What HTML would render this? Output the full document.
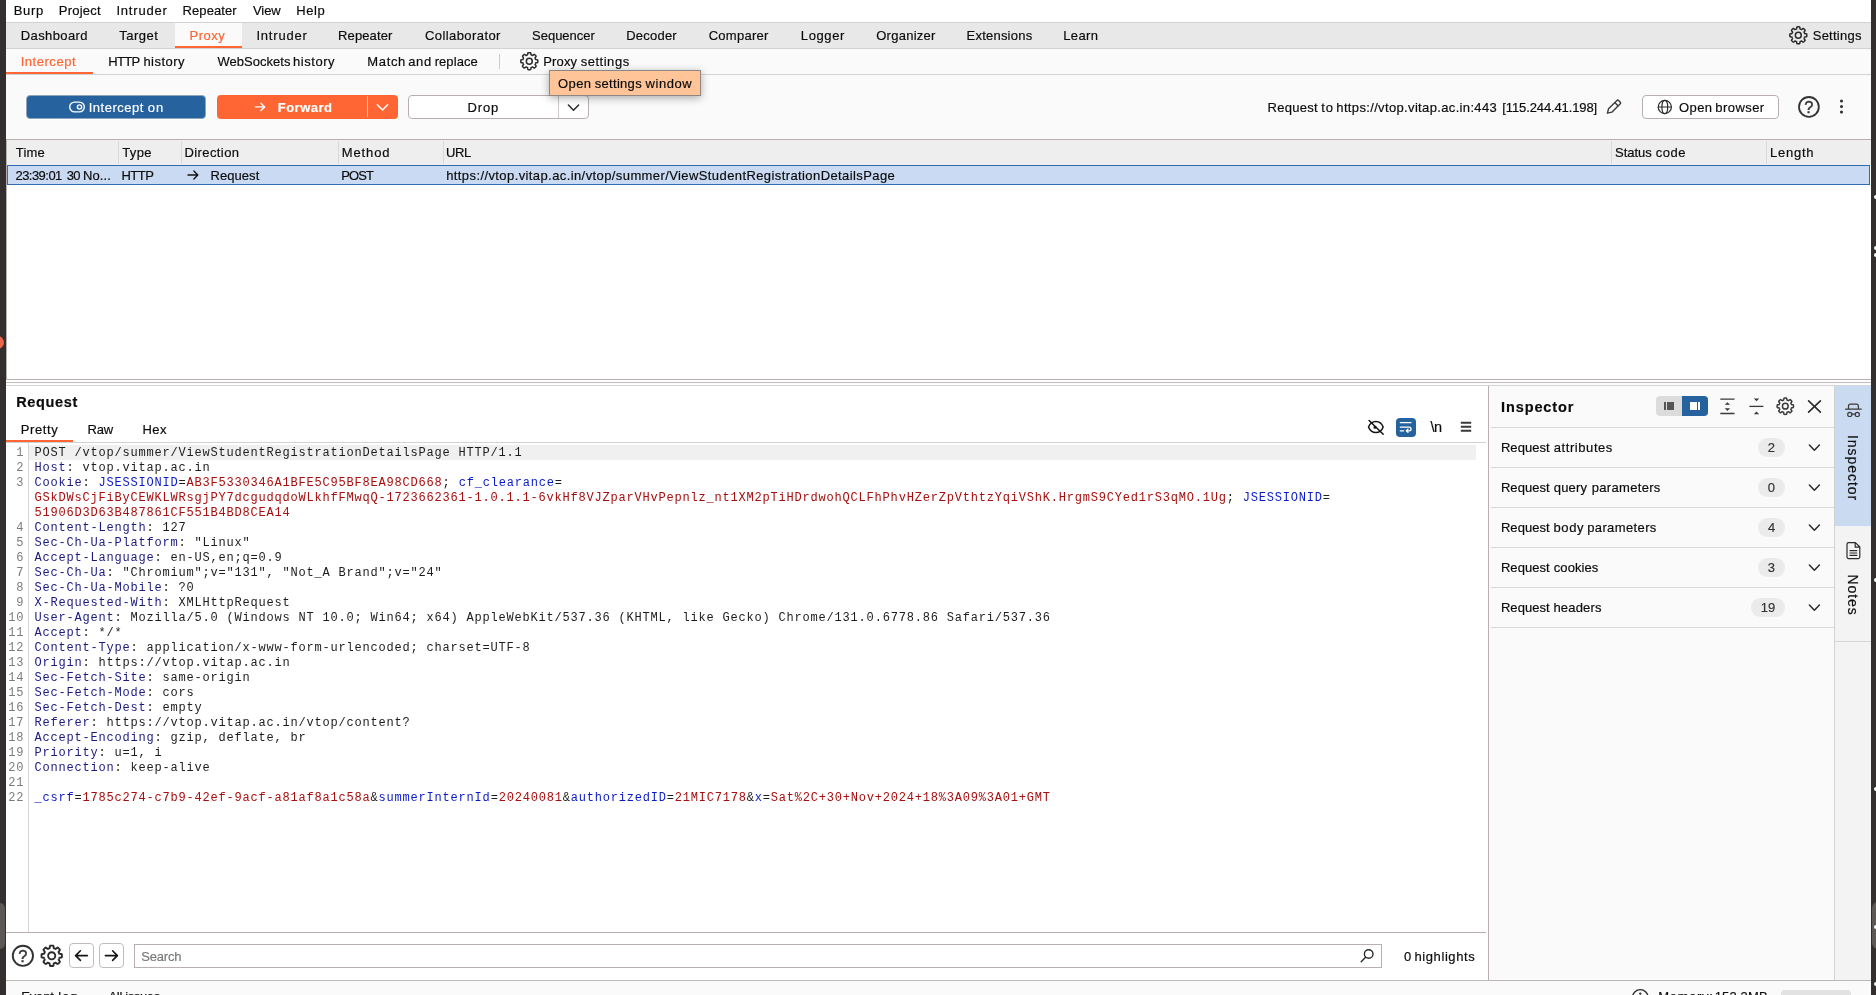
<!DOCTYPE html>
<html lang="en"><head><meta charset="utf-8"><title>Burp Suite - Proxy Intercept</title>
<style>

html,body{margin:0;padding:0;}
body{width:1876px;height:995px;overflow:hidden;position:relative;background:#fafafa;font-family:"Liberation Sans", "DejaVu Sans", sans-serif;font-size:13px;color:#0c0c0c;}
.w{position:absolute;left:0;top:0;width:1876px;height:995px;overflow:hidden;transform:translateZ(0);}
.a{position:absolute;box-sizing:border-box;}
.t{position:absolute;white-space:pre;-webkit-text-stroke:0.18px currentColor;}
svg{overflow:visible;}
.code{position:absolute;left:34.5px;top:445.5px;font-family:"Liberation Mono", "DejaVu Sans Mono", monospace;font-size:12px;letter-spacing:0.8px;line-height:15px;white-space:pre;color:#1c1c1c;}
.code div{height:15px;}
.ln{position:absolute;left:7px;top:445.5px;width:17.3px;text-align:right;font-family:"Liberation Mono", "DejaVu Sans Mono", monospace;font-size:12px;letter-spacing:0.8px;line-height:15px;white-space:pre;color:#7c7c7c;}
.ln div{height:15px;}
.h{color:#1a1a80;} .n{color:#0a1ac8;} .v{color:#a80e0e;}
</style></head><body><div class="w">
<div class="a" style="left:0px;top:0px;width:6px;height:995px;background:#322f2e;"></div>
<div class="a" style="left:1871px;top:0px;width:5px;height:995px;background:#322f2e;"></div>
<div class="a" style="left:-9px;top:336px;width:13px;height:13px;border-radius:50%;background:#e8664a"></div>
<div class="a" style="left:-6px;top:903px;width:11px;height:46px;border-radius:6px;background:#5c5856"></div>
<div class="a" style="left:1872px;top:902px;width:12px;height:47px;border-radius:6px;background:#5c5856"></div>
<div class="a" style="left:1873.5px;top:194.5px;width:5px;height:4px;border-radius:2px;background:#fff"></div>
<div class="a" style="left:1873.5px;top:245.5px;width:5px;height:4px;border-radius:2px;background:#fff"></div>
<div class="a" style="left:1873.5px;top:253px;width:5px;height:4px;border-radius:2px;background:#fff"></div>
<div class="a" style="left:1873.5px;top:578px;width:5px;height:4px;border-radius:2px;background:#fff"></div>
<div class="a" style="left:1873.5px;top:786.5px;width:5px;height:4px;border-radius:2px;background:#fff"></div>
<div class="a" style="left:1873.5px;top:925px;width:5px;height:4px;border-radius:2px;background:#fff"></div>
<div class="a" style="left:1873.5px;top:982px;width:5px;height:4px;border-radius:2px;background:#fff"></div>
<div class="a" style="left:6px;top:0px;width:1865px;height:22px;background:#ffffff;"></div>
<div class="a" style="left:6px;top:22px;width:1865px;height:1px;background:#cfd3d3;"></div>
<div class="a" style="left:6px;top:23px;width:1865px;height:25px;background:#e8e8e8;"></div>
<div class="a" style="left:6px;top:48px;width:1865px;height:1px;background:#cfd3d3;"></div>
<div class="a" style="left:175px;top:23px;width:66.5px;height:25px;background:#fafafa;"></div>
<div class="a" style="left:175px;top:46px;width:66.5px;height:2px;background:#ff6633;"></div>
<svg class="a" style="left:0;top:0" width="1876" height="995" fill="none" stroke="#2b2b2b" stroke-width="1.5" stroke-linejoin="round"><path d="M1806.80 35.30 L1806.79 35.63 L1806.77 35.97 L1806.74 36.30 L1806.67 36.63 L1806.03 36.84 L1805.08 36.93 L1804.60 37.08 L1804.52 37.32 L1804.44 37.57 L1804.35 37.80 L1804.24 38.04 L1804.13 38.27 L1804.01 38.50 L1804.25 38.94 L1804.85 39.68 L1805.16 40.28 L1804.98 40.56 L1804.76 40.82 L1804.54 41.07 L1804.31 41.31 L1804.07 41.54 L1803.82 41.76 L1803.56 41.98 L1803.28 42.16 L1802.68 41.85 L1801.94 41.25 L1801.50 41.01 L1801.27 41.13 L1801.04 41.24 L1800.80 41.35 L1800.57 41.44 L1800.32 41.52 L1800.08 41.60 L1799.93 42.08 L1799.84 43.03 L1799.63 43.67 L1799.30 43.74 L1798.97 43.77 L1798.63 43.79 L1798.30 43.80 L1797.97 43.79 L1797.63 43.77 L1797.30 43.74 L1796.97 43.67 L1796.76 43.03 L1796.67 42.08 L1796.52 41.60 L1796.28 41.52 L1796.03 41.44 L1795.80 41.35 L1795.56 41.24 L1795.33 41.13 L1795.10 41.01 L1794.66 41.25 L1793.92 41.85 L1793.32 42.16 L1793.04 41.98 L1792.78 41.76 L1792.53 41.54 L1792.29 41.31 L1792.06 41.07 L1791.84 40.82 L1791.62 40.56 L1791.44 40.28 L1791.75 39.68 L1792.35 38.94 L1792.59 38.50 L1792.47 38.27 L1792.36 38.04 L1792.25 37.80 L1792.16 37.57 L1792.08 37.32 L1792.00 37.08 L1791.52 36.93 L1790.57 36.84 L1789.93 36.63 L1789.86 36.30 L1789.83 35.97 L1789.81 35.63 L1789.80 35.30 L1789.81 34.97 L1789.83 34.63 L1789.86 34.30 L1789.93 33.97 L1790.57 33.76 L1791.52 33.67 L1792.00 33.52 L1792.08 33.28 L1792.16 33.03 L1792.25 32.80 L1792.36 32.56 L1792.47 32.33 L1792.59 32.10 L1792.35 31.66 L1791.75 30.92 L1791.44 30.32 L1791.62 30.04 L1791.84 29.78 L1792.06 29.53 L1792.29 29.29 L1792.53 29.06 L1792.78 28.84 L1793.04 28.62 L1793.32 28.44 L1793.92 28.75 L1794.66 29.35 L1795.10 29.59 L1795.33 29.47 L1795.56 29.36 L1795.80 29.25 L1796.03 29.16 L1796.28 29.08 L1796.52 29.00 L1796.67 28.52 L1796.76 27.57 L1796.97 26.93 L1797.30 26.86 L1797.63 26.83 L1797.97 26.81 L1798.30 26.80 L1798.63 26.81 L1798.97 26.83 L1799.30 26.86 L1799.63 26.93 L1799.84 27.57 L1799.93 28.52 L1800.08 29.00 L1800.32 29.08 L1800.57 29.16 L1800.80 29.25 L1801.04 29.36 L1801.27 29.47 L1801.50 29.59 L1801.94 29.35 L1802.68 28.75 L1803.28 28.44 L1803.56 28.62 L1803.82 28.84 L1804.07 29.06 L1804.31 29.29 L1804.54 29.53 L1804.76 29.78 L1804.98 30.04 L1805.16 30.32 L1804.85 30.92 L1804.25 31.66 L1804.01 32.10 L1804.13 32.33 L1804.24 32.56 L1804.35 32.80 L1804.44 33.03 L1804.52 33.28 L1804.60 33.52 L1805.08 33.67 L1806.03 33.76 L1806.67 33.97 L1806.74 34.30 L1806.77 34.63 L1806.79 34.97Z"/><circle cx="1798.3" cy="35.3" r="2.97"/></svg>
<div class="a" style="left:6px;top:49px;width:1865px;height:25px;background:#fafafa;"></div>
<div class="a" style="left:6px;top:74px;width:1865px;height:1px;background:#cfd3d3;"></div>
<div class="a" style="left:6px;top:72px;width:87px;height:2px;background:#ff6633;"></div>
<div class="a" style="left:499px;top:54px;width:1px;height:15px;background:#cccccc;"></div>
<svg class="a" style="left:0;top:0" width="1876" height="995" fill="none" stroke="#2b2b2b" stroke-width="1.5" stroke-linejoin="round"><path d="M537.80 61.20 L537.79 61.53 L537.77 61.87 L537.74 62.20 L537.67 62.53 L537.03 62.74 L536.08 62.83 L535.60 62.98 L535.52 63.22 L535.44 63.47 L535.35 63.70 L535.24 63.94 L535.13 64.17 L535.01 64.40 L535.25 64.84 L535.85 65.58 L536.16 66.18 L535.98 66.46 L535.76 66.72 L535.54 66.97 L535.31 67.21 L535.07 67.44 L534.82 67.66 L534.56 67.88 L534.28 68.06 L533.68 67.75 L532.94 67.15 L532.50 66.91 L532.27 67.03 L532.04 67.14 L531.80 67.25 L531.57 67.34 L531.32 67.42 L531.08 67.50 L530.93 67.98 L530.84 68.93 L530.63 69.57 L530.30 69.64 L529.97 69.67 L529.63 69.69 L529.30 69.70 L528.97 69.69 L528.63 69.67 L528.30 69.64 L527.97 69.57 L527.76 68.93 L527.67 67.98 L527.52 67.50 L527.28 67.42 L527.03 67.34 L526.80 67.25 L526.56 67.14 L526.33 67.03 L526.10 66.91 L525.66 67.15 L524.92 67.75 L524.32 68.06 L524.04 67.88 L523.78 67.66 L523.53 67.44 L523.29 67.21 L523.06 66.97 L522.84 66.72 L522.62 66.46 L522.44 66.18 L522.75 65.58 L523.35 64.84 L523.59 64.40 L523.47 64.17 L523.36 63.94 L523.25 63.70 L523.16 63.47 L523.08 63.22 L523.00 62.98 L522.52 62.83 L521.57 62.74 L520.93 62.53 L520.86 62.20 L520.83 61.87 L520.81 61.53 L520.80 61.20 L520.81 60.87 L520.83 60.53 L520.86 60.20 L520.93 59.87 L521.57 59.66 L522.52 59.57 L523.00 59.42 L523.08 59.18 L523.16 58.93 L523.25 58.70 L523.36 58.46 L523.47 58.23 L523.59 58.00 L523.35 57.56 L522.75 56.82 L522.44 56.22 L522.62 55.94 L522.84 55.68 L523.06 55.43 L523.29 55.19 L523.53 54.96 L523.78 54.74 L524.04 54.52 L524.32 54.34 L524.92 54.65 L525.66 55.25 L526.10 55.49 L526.33 55.37 L526.56 55.26 L526.80 55.15 L527.03 55.06 L527.28 54.98 L527.52 54.90 L527.67 54.42 L527.76 53.47 L527.97 52.83 L528.30 52.76 L528.63 52.73 L528.97 52.71 L529.30 52.70 L529.63 52.71 L529.97 52.73 L530.30 52.76 L530.63 52.83 L530.84 53.47 L530.93 54.42 L531.08 54.90 L531.32 54.98 L531.57 55.06 L531.80 55.15 L532.04 55.26 L532.27 55.37 L532.50 55.49 L532.94 55.25 L533.68 54.65 L534.28 54.34 L534.56 54.52 L534.82 54.74 L535.07 54.96 L535.31 55.19 L535.54 55.43 L535.76 55.68 L535.98 55.94 L536.16 56.22 L535.85 56.82 L535.25 57.56 L535.01 58.00 L535.13 58.23 L535.24 58.46 L535.35 58.70 L535.44 58.93 L535.52 59.18 L535.60 59.42 L536.08 59.57 L537.03 59.66 L537.67 59.87 L537.74 60.20 L537.77 60.53 L537.79 60.87Z"/><circle cx="529.3" cy="61.2" r="2.97"/></svg>
<div class="a" style="left:26px;top:95px;width:180px;height:23.5px;background:#26629d;border-radius:4px;border:1px solid #8fa3bf;box-shadow:0 0 0 1px #ffffff"></div>
<svg class="a" style="left:0;top:0" width="1876" height="995" fill="none" stroke="#ffffff" stroke-width="1.4" stroke-linecap="round" stroke-linejoin="round"><rect x="69.7" y="102.1" width="14.6" height="9.8" rx="4.9"/><circle cx="79.5" cy="107" r="2.1"/></svg>
<div class="a" style="left:216.5px;top:95px;width:181.5px;height:23.5px;background:#ff6633;border-radius:4px;"></div>
<div class="a" style="left:366.8px;top:96.3px;width:1px;height:21px;background:#e4d2ca;"></div>
<svg class="a" style="left:0;top:0" width="1876" height="995" fill="none" stroke="#ffffff" stroke-width="1.4" stroke-linecap="round" stroke-linejoin="round"><path d="M255.3 106.9 H264.6 M260.90000000000003 103.2 L264.6 106.9 L260.90000000000003 110.60000000000001"/></svg>
<svg class="a" style="left:0;top:0" width="1876" height="995" fill="none" stroke="#ffffff" stroke-width="1.5" stroke-linecap="round" stroke-linejoin="round"><path d="M377.4 104.75 L382.5 110.05000000000001 L387.6 104.75"/></svg>
<div class="a" style="left:408px;top:95px;width:181px;height:23.5px;background:#ffffff;border-radius:4px;border:1px solid #b8b0b0"></div>
<div class="a" style="left:558px;top:96px;width:1px;height:21.5px;background:#d0caca;"></div>
<svg class="a" style="left:0;top:0" width="1876" height="995" fill="none" stroke="#2b2b2b" stroke-width="1.5" stroke-linecap="round" stroke-linejoin="round"><path d="M568.4 104.94999999999999 L573.5 110.25 L578.6 104.94999999999999"/></svg>
<div class="a" style="left:549px;top:70px;width:151.5px;height:26px;background:#ffc599;border:1px solid #8f8583;box-shadow:0 2px 8px rgba(0,0,0,.33)"></div>
<svg class="a" style="left:0;top:0" width="1876" height="995" fill="none" stroke="#3a3a3a" stroke-width="1.4" stroke-linecap="round" stroke-linejoin="round"><path d="M1607.41 113.19 L1608.55 108.78 L1616.96 100.51 Q1617.82 99.67 1618.66 100.52 L1620.27 102.16 Q1621.12 103.02 1620.26 103.86 L1611.84 112.13 Z M1614.83 102.61 L1618.12 105.96"/></svg>
<div class="a" style="left:1642px;top:95px;width:137px;height:23.5px;background:#ffffff;border-radius:4px;border:1px solid #b8b0b0"></div>
<svg class="a" style="left:0;top:0" width="1876" height="995" fill="none" stroke="#2b2b2b" stroke-width="1.2" stroke-linecap="round" stroke-linejoin="round"><circle cx="1664.8" cy="107" r="6.6"/><ellipse cx="1664.8" cy="107" rx="2.9" ry="6.6"/><path d="M1658.2 107 H1671.4"/></svg>
<svg class="a" style="left:0;top:0" width="1876" height="995" fill="none" stroke="#333333" stroke-width="1.8" stroke-linecap="round" stroke-linejoin="round"><circle cx="1808.9" cy="106.9" r="9.9"/></svg>
<span class="t" style="left:1798.9px;top:96.9px;width:20px;text-align:center;line-height:20px;font-size:16.5px;font-weight:400;color:#333333;-webkit-text-stroke:0.4px #333333;">?</span>
<svg class="a" style="left:0;top:0" width="1876" height="995" fill="#2b2b2b" stroke="none" stroke-width="0" stroke-linecap="round" stroke-linejoin="round"><circle cx="1841.5" cy="101" r="1.5"/><circle cx="1841.5" cy="106.5" r="1.5"/><circle cx="1841.5" cy="112" r="1.5"/></svg>
<div class="a" style="left:6px;top:139px;width:1865px;height:241px;background:#ffffff;border:1px solid #b8b0b0;border-right:none;"></div>
<div class="a" style="left:7px;top:140px;width:1864px;height:25px;background:#eeeeee;"></div>
<div class="a" style="left:118px;top:141px;width:1px;height:23px;background:#d9d9d9;"></div>
<div class="a" style="left:181px;top:141px;width:1px;height:23px;background:#d9d9d9;"></div>
<div class="a" style="left:338px;top:141px;width:1px;height:23px;background:#d9d9d9;"></div>
<div class="a" style="left:442.5px;top:141px;width:1px;height:23px;background:#d9d9d9;"></div>
<div class="a" style="left:1611px;top:141px;width:1px;height:23px;background:#d9d9d9;"></div>
<div class="a" style="left:1766px;top:141px;width:1px;height:23px;background:#d9d9d9;"></div>
<div class="a" style="left:7px;top:165px;width:1863px;height:20px;background:#c9daf2;border:1px solid #326cb0"></div>
<svg class="a" style="left:0;top:0" width="1876" height="995" fill="none" stroke="#141414" stroke-width="1.4" stroke-linecap="round" stroke-linejoin="round"><path d="M188 175 H197.8 M193.9 171.1 L197.8 175 L193.9 178.9"/></svg>
<div class="a" style="left:6px;top:380px;width:1865px;height:6px;background:#fdfdfd;"></div>
<div class="a" style="left:6px;top:382px;width:1865px;height:1px;background:#c4bebe;"></div>
<div class="a" style="left:6px;top:385px;width:1865px;height:1px;background:#d6d6d6;"></div>
<div class="a" style="left:6px;top:386px;width:1482px;height:594px;background:#ffffff;"></div>
<div class="a" style="left:6px;top:442px;width:1480px;height:1px;background:#cfd3d3;"></div>
<div class="a" style="left:6px;top:440px;width:66.5px;height:2px;background:#ff6633;"></div>
<svg class="a" style="left:0;top:0" width="1876" height="995" fill="none" stroke="#141414" stroke-width="1.5" stroke-linecap="round" stroke-linejoin="round"><path d="M1368.5 427 C1371.4 419.6 1380.4 419.6 1383.2 427 C1380.4 434.4 1371.4 434.4 1368.5 427 Z"/><circle cx="1375" cy="427.2" r="0.8" fill="#141414"/><path d="M1369.1 420.5 L1383.2 434.3"/></svg>
<div class="a" style="left:1396px;top:418px;width:20px;height:19px;border-radius:4px;background:#26629d"></div>
<svg class="a" style="left:0;top:0" width="1876" height="995" fill="none" stroke="#ffffff" stroke-width="1.3" stroke-linecap="round" stroke-linejoin="round"><path d="M1400.3 422.6 H1411 M1400.3 427.1 H1409.2 a1.85 1.85 0 0 1 0 3.7 H1406.6 M1408 429.2 L1406.3 430.8 L1408 432.4 M1400.3 430.8 H1403.6"/></svg>
<svg class="a" style="left:0;top:0" width="1876" height="995" fill="none" stroke="#3a3a3a" stroke-width="1.9" stroke-linecap="butt" stroke-linejoin="round"><path d="M1460.8 422.8 H1471.2 M1460.8 426.8 H1471.2 M1460.8 430.8 H1471.2"/></svg>
<div class="a" style="left:28px;top:443px;width:1px;height:489px;background:#d6d6d6;"></div>
<div class="a" style="left:29px;top:445px;width:1447px;height:15px;background:#f0f0f0;"></div>
<div class="a" style="left:6px;top:932px;width:1480px;height:1px;background:#b8b0b0;"></div>
<svg class="a" style="left:0;top:0" width="1876" height="995" fill="none" stroke="#333333" stroke-width="1.9" stroke-linecap="round" stroke-linejoin="round"><circle cx="22.9" cy="955.8" r="10.1"/></svg>
<span class="t" style="left:12.899999999999999px;top:945.8px;width:20px;text-align:center;line-height:20px;font-size:16.5px;font-weight:400;color:#333333;-webkit-text-stroke:0.4px #333333;">?</span>
<svg class="a" style="left:0;top:0" width="1876" height="995" fill="none" stroke="#2b2b2b" stroke-width="1.9" stroke-linejoin="round"><path d="M61.90 955.80 L61.89 956.20 L61.87 956.60 L61.83 957.00 L61.75 957.39 L60.98 957.65 L59.84 957.75 L59.26 957.93 L59.17 958.23 L59.07 958.52 L58.96 958.81 L58.83 959.09 L58.70 959.37 L58.56 959.64 L58.84 960.17 L59.56 961.06 L59.93 961.78 L59.71 962.11 L59.46 962.42 L59.19 962.72 L58.91 963.01 L58.62 963.29 L58.32 963.56 L58.01 963.81 L57.68 964.03 L56.96 963.66 L56.07 962.94 L55.54 962.66 L55.27 962.80 L54.99 962.93 L54.71 963.06 L54.42 963.17 L54.13 963.27 L53.83 963.36 L53.65 963.94 L53.55 965.08 L53.29 965.85 L52.90 965.93 L52.50 965.97 L52.10 965.99 L51.70 966.00 L51.30 965.99 L50.90 965.97 L50.50 965.93 L50.11 965.85 L49.85 965.08 L49.75 963.94 L49.57 963.36 L49.27 963.27 L48.98 963.17 L48.69 963.06 L48.41 962.93 L48.13 962.80 L47.86 962.66 L47.33 962.94 L46.44 963.66 L45.72 964.03 L45.39 963.81 L45.08 963.56 L44.78 963.29 L44.49 963.01 L44.21 962.72 L43.94 962.42 L43.69 962.11 L43.47 961.78 L43.84 961.06 L44.56 960.17 L44.84 959.64 L44.70 959.37 L44.57 959.09 L44.44 958.81 L44.33 958.52 L44.23 958.23 L44.14 957.93 L43.56 957.75 L42.42 957.65 L41.65 957.39 L41.57 957.00 L41.53 956.60 L41.51 956.20 L41.50 955.80 L41.51 955.40 L41.53 955.00 L41.57 954.60 L41.65 954.21 L42.42 953.95 L43.56 953.85 L44.14 953.67 L44.23 953.37 L44.33 953.08 L44.44 952.79 L44.57 952.51 L44.70 952.23 L44.84 951.96 L44.56 951.43 L43.84 950.54 L43.47 949.82 L43.69 949.49 L43.94 949.18 L44.21 948.88 L44.49 948.59 L44.78 948.31 L45.08 948.04 L45.39 947.79 L45.72 947.57 L46.44 947.94 L47.33 948.66 L47.86 948.94 L48.13 948.80 L48.41 948.67 L48.69 948.54 L48.98 948.43 L49.27 948.33 L49.57 948.24 L49.75 947.66 L49.85 946.52 L50.11 945.75 L50.50 945.67 L50.90 945.63 L51.30 945.61 L51.70 945.60 L52.10 945.61 L52.50 945.63 L52.90 945.67 L53.29 945.75 L53.55 946.52 L53.65 947.66 L53.83 948.24 L54.13 948.33 L54.42 948.43 L54.71 948.54 L54.99 948.67 L55.27 948.80 L55.54 948.94 L56.07 948.66 L56.96 947.94 L57.68 947.57 L58.01 947.79 L58.32 948.04 L58.62 948.31 L58.91 948.59 L59.19 948.88 L59.46 949.18 L59.71 949.49 L59.93 949.82 L59.56 950.54 L58.84 951.43 L58.56 951.96 L58.70 952.23 L58.83 952.51 L58.96 952.79 L59.07 953.08 L59.17 953.37 L59.26 953.67 L59.84 953.85 L60.98 953.95 L61.75 954.21 L61.83 954.60 L61.87 955.00 L61.89 955.40Z"/><circle cx="51.7" cy="955.8" r="3.57"/></svg>
<div class="a" style="left:69px;top:943px;width:24.6px;height:25px;background:#fff;border-radius:4px;border:1px solid #c4bcbc"></div>
<div class="a" style="left:99px;top:943px;width:24.6px;height:25px;background:#fff;border-radius:4px;border:1px solid #c4bcbc"></div>
<svg class="a" style="left:0;top:0" width="1876" height="995" fill="none" stroke="#141414" stroke-width="1.6" stroke-linecap="round" stroke-linejoin="round"><path d="M87.4 955.6 H75.6 M80.39999999999999 950.8000000000001 L75.6 955.6 L80.39999999999999 960.4"/></svg>
<svg class="a" style="left:0;top:0" width="1876" height="995" fill="none" stroke="#141414" stroke-width="1.6" stroke-linecap="round" stroke-linejoin="round"><path d="M105.4 955.6 H117.4 M112.60000000000001 950.8000000000001 L117.4 955.6 L112.60000000000001 960.4"/></svg>
<div class="a" style="left:134px;top:944px;width:1247.5px;height:24px;background:#fff;border:1px solid #b8b0b0"></div>
<svg class="a" style="left:0;top:0" width="1876" height="995" fill="none" stroke="#2b2b2b" stroke-width="1.4" stroke-linecap="round" stroke-linejoin="round"><circle cx="1368.7" cy="954" r="4.3"/><path d="M1365.6 957.2 L1361.2 961.8"/></svg>
<div class="a" style="left:1488px;top:386px;width:346px;height:594px;background:#fafafa;"></div>
<div class="a" style="left:1488px;top:386px;width:1px;height:594px;background:#b8b0b0;"></div>
<div class="a" style="left:1656px;top:396px;width:52px;height:20px;border-radius:4px;background:#dcdcdc"></div>
<div class="a" style="left:1682px;top:396px;width:26px;height:20px;border-radius:0 4px 4px 0;background:#26629d"></div>
<div class="a" style="left:1663.5px;top:401.7px;width:2px;height:8.2px;background:#555555;"></div>
<div class="a" style="left:1667px;top:401.7px;width:7.2px;height:8.2px;background:#555555;"></div>
<div class="a" style="left:1689.6px;top:401.7px;width:7.3px;height:8.2px;background:#ffffff;"></div>
<div class="a" style="left:1698.3px;top:401.7px;width:2.1px;height:8.2px;background:#ffffff;"></div>
<svg class="a" style="left:0;top:0" width="1876" height="995" fill="none" stroke="none" stroke-width="0" stroke-linecap="round" stroke-linejoin="round"><path d="M1720.3 399.1 H1734.5 M1720.3 413.5 H1734.5" stroke="#3a3a3a" stroke-width="1.3" stroke-linecap="butt"/><path d="M1727.4 402.2 L1730.1 404.8 H1724.7 Z M1727.4 411 L1730.1 408.3 H1724.7 Z" fill="#3a3a3a"/></svg>
<svg class="a" style="left:0;top:0" width="1876" height="995" fill="none" stroke="none" stroke-width="0" stroke-linecap="round" stroke-linejoin="round"><path d="M1749.4 406.4 H1763.4" stroke="#3a3a3a" stroke-width="1.3" stroke-linecap="butt"/><path d="M1756.5 401.3 L1759.2 398.6 H1753.8 Z M1756.5 411.5 L1759.2 414.3 H1753.8 Z" fill="#3a3a3a"/></svg>
<svg class="a" style="left:0;top:0" width="1876" height="995" fill="none" stroke="#3a3a3a" stroke-width="1.5" stroke-linejoin="round"><path d="M1793.50 406.20 L1793.49 406.52 L1793.47 406.84 L1793.44 407.16 L1793.38 407.48 L1792.76 407.68 L1791.84 407.77 L1791.38 407.92 L1791.30 408.15 L1791.22 408.39 L1791.13 408.62 L1791.03 408.84 L1790.93 409.07 L1790.81 409.29 L1791.04 409.72 L1791.62 410.42 L1791.92 411.01 L1791.74 411.28 L1791.54 411.53 L1791.32 411.77 L1791.10 412.00 L1790.87 412.22 L1790.63 412.44 L1790.38 412.64 L1790.11 412.82 L1789.52 412.52 L1788.82 411.94 L1788.39 411.71 L1788.17 411.83 L1787.94 411.93 L1787.72 412.03 L1787.49 412.12 L1787.25 412.20 L1787.02 412.28 L1786.87 412.74 L1786.78 413.66 L1786.58 414.28 L1786.26 414.34 L1785.94 414.37 L1785.62 414.39 L1785.30 414.40 L1784.98 414.39 L1784.66 414.37 L1784.34 414.34 L1784.02 414.28 L1783.82 413.66 L1783.73 412.74 L1783.58 412.28 L1783.35 412.20 L1783.11 412.12 L1782.88 412.03 L1782.66 411.93 L1782.43 411.83 L1782.21 411.71 L1781.78 411.94 L1781.08 412.52 L1780.49 412.82 L1780.22 412.64 L1779.97 412.44 L1779.73 412.22 L1779.50 412.00 L1779.28 411.77 L1779.06 411.53 L1778.86 411.28 L1778.68 411.01 L1778.98 410.42 L1779.56 409.72 L1779.79 409.29 L1779.67 409.07 L1779.57 408.84 L1779.47 408.62 L1779.38 408.39 L1779.30 408.15 L1779.22 407.92 L1778.76 407.77 L1777.84 407.68 L1777.22 407.48 L1777.16 407.16 L1777.13 406.84 L1777.11 406.52 L1777.10 406.20 L1777.11 405.88 L1777.13 405.56 L1777.16 405.24 L1777.22 404.92 L1777.84 404.72 L1778.76 404.63 L1779.22 404.48 L1779.30 404.25 L1779.38 404.01 L1779.47 403.78 L1779.57 403.56 L1779.67 403.33 L1779.79 403.11 L1779.56 402.68 L1778.98 401.98 L1778.68 401.39 L1778.86 401.12 L1779.06 400.87 L1779.28 400.63 L1779.50 400.40 L1779.73 400.18 L1779.97 399.96 L1780.22 399.76 L1780.49 399.58 L1781.08 399.88 L1781.78 400.46 L1782.21 400.69 L1782.43 400.57 L1782.66 400.47 L1782.88 400.37 L1783.11 400.28 L1783.35 400.20 L1783.58 400.12 L1783.73 399.66 L1783.82 398.74 L1784.02 398.12 L1784.34 398.06 L1784.66 398.03 L1784.98 398.01 L1785.30 398.00 L1785.62 398.01 L1785.94 398.03 L1786.26 398.06 L1786.58 398.12 L1786.78 398.74 L1786.87 399.66 L1787.02 400.12 L1787.25 400.20 L1787.49 400.28 L1787.72 400.37 L1787.94 400.47 L1788.17 400.57 L1788.39 400.69 L1788.82 400.46 L1789.52 399.88 L1790.11 399.58 L1790.38 399.76 L1790.63 399.96 L1790.87 400.18 L1791.10 400.40 L1791.32 400.63 L1791.54 400.87 L1791.74 401.12 L1791.92 401.39 L1791.62 401.98 L1791.04 402.68 L1790.81 403.11 L1790.93 403.33 L1791.03 403.56 L1791.13 403.78 L1791.22 404.01 L1791.30 404.25 L1791.38 404.48 L1791.84 404.63 L1792.76 404.72 L1793.38 404.92 L1793.44 405.24 L1793.47 405.56 L1793.49 405.88Z"/><circle cx="1785.3" cy="406.2" r="2.87"/></svg>
<svg class="a" style="left:0;top:0" width="1876" height="995" fill="none" stroke="#2b2b2b" stroke-width="1.6" stroke-linecap="round" stroke-linejoin="round"><path d="M1808.6 400.9 L1820.4 412.2 M1820.4 400.9 L1808.6 412.2"/></svg>
<div class="a" style="left:1491px;top:427px;width:343px;height:1px;background:#d9d9d9;"></div>
<div class="a" style="left:1758px;top:437.90000000000003px;width:26.6px;height:18.8px;border-radius:9.4px;background:#ebebeb"></div>
<svg class="a" style="left:0;top:0" width="1876" height="995" fill="none" stroke="#2b2b2b" stroke-width="1.5" stroke-linecap="round" stroke-linejoin="round"><path d="M1809.4 445.0 L1814.4 450.20000000000005 L1819.4 445.0"/></svg>
<div class="a" style="left:1491px;top:467px;width:343px;height:1px;background:#d9d9d9;"></div>
<div class="a" style="left:1758px;top:477.90000000000003px;width:26.6px;height:18.8px;border-radius:9.4px;background:#ebebeb"></div>
<svg class="a" style="left:0;top:0" width="1876" height="995" fill="none" stroke="#2b2b2b" stroke-width="1.5" stroke-linecap="round" stroke-linejoin="round"><path d="M1809.4 485.0 L1814.4 490.20000000000005 L1819.4 485.0"/></svg>
<div class="a" style="left:1491px;top:507px;width:343px;height:1px;background:#d9d9d9;"></div>
<div class="a" style="left:1758px;top:517.9px;width:26.6px;height:18.8px;border-radius:9.4px;background:#ebebeb"></div>
<svg class="a" style="left:0;top:0" width="1876" height="995" fill="none" stroke="#2b2b2b" stroke-width="1.5" stroke-linecap="round" stroke-linejoin="round"><path d="M1809.4 524.9999999999999 L1814.4 530.1999999999999 L1819.4 524.9999999999999"/></svg>
<div class="a" style="left:1491px;top:547px;width:343px;height:1px;background:#d9d9d9;"></div>
<div class="a" style="left:1758px;top:557.9px;width:26.6px;height:18.8px;border-radius:9.4px;background:#ebebeb"></div>
<svg class="a" style="left:0;top:0" width="1876" height="995" fill="none" stroke="#2b2b2b" stroke-width="1.5" stroke-linecap="round" stroke-linejoin="round"><path d="M1809.4 564.9999999999999 L1814.4 570.1999999999999 L1819.4 564.9999999999999"/></svg>
<div class="a" style="left:1491px;top:587px;width:343px;height:1px;background:#d9d9d9;"></div>
<div class="a" style="left:1751px;top:597.9px;width:33.6px;height:18.8px;border-radius:9.4px;background:#ebebeb"></div>
<svg class="a" style="left:0;top:0" width="1876" height="995" fill="none" stroke="#2b2b2b" stroke-width="1.5" stroke-linecap="round" stroke-linejoin="round"><path d="M1809.4 604.9999999999999 L1814.4 610.1999999999999 L1819.4 604.9999999999999"/></svg>
<div class="a" style="left:1491px;top:627px;width:343px;height:1px;background:#d9d9d9;"></div>
<div class="a" style="left:1834px;top:386px;width:37px;height:594px;background:#f4f3f3;"></div>
<div class="a" style="left:1834px;top:386px;width:1px;height:594px;background:#cfd3d3;"></div>
<div class="a" style="left:1835px;top:386px;width:36px;height:140px;background:#c9daf1;"></div>
<div class="a" style="left:1835px;top:640.5px;width:36px;height:1px;background:#d6d6d6;"></div>
<svg class="a" style="left:0;top:0" width="1876" height="995" fill="none" stroke="#3a3a3a" stroke-width="1.2" stroke-linecap="round" stroke-linejoin="round"><path d="M1845.6 409.2 H1861.2 M1848.5 409 V406.2 a2 2 0 0 1 2 -2 H1856.4 a2 2 0 0 1 2 2 V409"/><circle cx="1849.8" cy="414.4" r="2.1"/><circle cx="1857.3" cy="414.4" r="2.1"/><path d="M1851.9 414.2 H1855.2"/></svg>
<span class="t" style="left:1853.2px;top:467.7px;font-size:14px;line-height:16px;transform:translate(-50%,-50%) rotate(90deg);letter-spacing:0.95px;color:#111">Inspector</span>
<svg class="a" style="left:0;top:0" width="1876" height="995" fill="none" stroke="#2b2b2b" stroke-width="1.2" stroke-linecap="round" stroke-linejoin="round"><path d="M1847 544.2 a1.6 1.6 0 0 1 1.6 -1.6 H1855.4 L1859.8 547 V557 a1.6 1.6 0 0 1 -1.6 1.6 H1848.6 a1.6 1.6 0 0 1 -1.6 -1.6 Z M1855.2 542.8 V547.2 H1859.6 M1850 550.6 H1856.8 M1850 553 H1856.8 M1850 555.4 H1856.8"/></svg>
<span class="t" style="left:1853.2px;top:595.4px;font-size:14px;line-height:16px;transform:translate(-50%,-50%) rotate(90deg);letter-spacing:0.9px;color:#111">Notes</span>
<div class="a" style="left:6px;top:980px;width:1865px;height:1px;background:#bdb6b6;"></div>
<div class="a" style="left:6px;top:981px;width:1865px;height:14px;background:#fafafa;"></div>
<svg class="a" style="left:0;top:0" width="1876" height="995" fill="none" stroke="#2b2b2b" stroke-width="1.4" stroke-linecap="round" stroke-linejoin="round"><circle cx="1640.3" cy="997.4" r="7.8"/><circle cx="1640.3" cy="993.6" r="0.5"/></svg>
<div class="a" style="left:1780.5px;top:990px;width:70.5px;height:12px;border-radius:4px;background:#e2e2e2"></div>
<span class="t " style="left:13.78px;top:1.5px;line-height:18px;font-size:13px;color:#0c0c0c;letter-spacing:0.665px;">Burp</span>
<span class="t " style="left:58.78px;top:1.5px;line-height:18px;font-size:13px;color:#0c0c0c;letter-spacing:0.215px;">Project</span>
<span class="t " style="left:116.4px;top:1.5px;line-height:18px;font-size:13px;color:#0c0c0c;letter-spacing:0.815px;">Intruder</span>
<span class="t " style="left:182.53px;top:1.5px;line-height:18px;font-size:13px;color:#0c0c0c;letter-spacing:0.093px;">Repeater</span>
<span class="t " style="left:253.04px;top:1.5px;line-height:18px;font-size:13px;color:#0c0c0c;letter-spacing:-0.109px;">View</span>
<span class="t " style="left:296.28px;top:1.5px;line-height:18px;font-size:13px;color:#0c0c0c;letter-spacing:0.571px;">Help</span>
<span class="t " style="left:20.78px;top:26.5px;line-height:18px;font-size:13px;color:#0c0c0c;letter-spacing:0.393px;">Dashboard</span>
<span class="t " style="left:119.31px;top:26.5px;line-height:18px;font-size:13px;color:#0c0c0c;letter-spacing:0.469px;">Target</span>
<span class="t " style="left:189.53px;top:26.5px;line-height:18px;font-size:13px;color:#ff6633;letter-spacing:0.489px;">Proxy</span>
<span class="t " style="left:256.4px;top:26.5px;line-height:18px;font-size:13px;color:#0c0c0c;letter-spacing:0.815px;">Intruder</span>
<span class="t " style="left:338.03px;top:26.5px;line-height:18px;font-size:13px;color:#0c0c0c;letter-spacing:0.128px;">Repeater</span>
<span class="t " style="left:424.94px;top:26.5px;line-height:18px;font-size:13px;color:#0c0c0c;letter-spacing:0.423px;">Collaborator</span>
<span class="t " style="left:532.01px;top:26.5px;line-height:18px;font-size:13px;color:#0c0c0c;letter-spacing:0.002px;">Sequencer</span>
<span class="t " style="left:626.28px;top:26.5px;line-height:18px;font-size:13px;color:#0c0c0c;letter-spacing:0.207px;">Decoder</span>
<span class="t " style="left:708.69px;top:26.5px;line-height:18px;font-size:13px;color:#0c0c0c;letter-spacing:0.276px;">Comparer</span>
<span class="t " style="left:800.78px;top:26.5px;line-height:18px;font-size:13px;color:#0c0c0c;letter-spacing:0.630px;">Logger</span>
<span class="t " style="left:876.23px;top:26.5px;line-height:18px;font-size:13px;color:#0c0c0c;letter-spacing:0.263px;">Organizer</span>
<span class="t " style="left:966.53px;top:26.5px;line-height:18px;font-size:13px;color:#0c0c0c;letter-spacing:0.227px;">Extensions</span>
<span class="t " style="left:1063.28px;top:26.5px;line-height:18px;font-size:13px;color:#0c0c0c;letter-spacing:0.378px;">Learn</span>
<span class="t " style="left:1812.71px;top:26.5px;line-height:18px;font-size:13px;color:#0c0c0c;letter-spacing:0.254px;">Settings</span>
<span class="t " style="left:20.65px;top:52.75px;line-height:18px;font-size:13px;color:#ff6633;letter-spacing:0.538px;">Intercept</span>
<span class="t " style="left:108.13px;top:52.75px;line-height:18px;font-size:13px;color:#0c0c0c;letter-spacing:-0.600px;">HTTP</span>
<span class="t " style="left:143.4px;top:52.75px;line-height:18px;font-size:13px;color:#0c0c0c;letter-spacing:0.488px;">history</span>
<span class="t " style="left:217.44px;top:52.75px;line-height:18px;font-size:13px;color:#0c0c0c;letter-spacing:0.031px;">WebSockets</span>
<span class="t " style="left:293.0px;top:52.75px;line-height:18px;font-size:13px;color:#0c0c0c;letter-spacing:0.538px;">history</span>
<span class="t " style="left:367.23px;top:52.75px;line-height:18px;font-size:13px;color:#0c0c0c;letter-spacing:0.676px;">Match</span>
<span class="t " style="left:408.35px;top:52.75px;line-height:18px;font-size:13px;color:#0c0c0c;letter-spacing:0.544px;">and</span>
<span class="t " style="left:434.64px;top:52.75px;line-height:18px;font-size:13px;color:#0c0c0c;letter-spacing:0.083px;">replace</span>
<span class="t " style="left:543.13px;top:52.75px;line-height:18px;font-size:13px;color:#0c0c0c;letter-spacing:0.189px;">Proxy</span>
<span class="t " style="left:580.64px;top:52.75px;line-height:18px;font-size:13px;color:#0c0c0c;letter-spacing:0.531px;">settings</span>
<span class="t " style="left:88.7px;top:98.5px;line-height:18px;font-size:13px;color:#ffffff;letter-spacing:0.525px;">Intercept</span>
<span class="t " style="left:147.81px;top:98.5px;line-height:18px;font-size:13px;color:#ffffff;letter-spacing:0.900px;">on</span>
<span class="t " style="left:277.73px;top:98.7px;line-height:18px;font-size:13px;color:#ffffff;font-weight:700;letter-spacing:0.505px;">Forward</span>
<span class="t " style="left:467.53px;top:98.7px;line-height:18px;font-size:13px;color:#0c0c0c;letter-spacing:0.842px;">Drop</span>
<span class="t " style="left:557.98px;top:74.9px;line-height:18px;font-size:13px;color:#0c0c0c;letter-spacing:0.416px;">Open</span>
<span class="t " style="left:594.74px;top:74.9px;line-height:18px;font-size:13px;color:#0c0c0c;letter-spacing:0.303px;">settings</span>
<span class="t " style="left:645.62px;top:74.9px;line-height:18px;font-size:13px;color:#0c0c0c;letter-spacing:0.538px;">window</span>
<span class="t " style="left:1267.53px;top:98.6px;line-height:18px;font-size:13px;color:#0c0c0c;letter-spacing:0.273px;">Request</span>
<span class="t " style="left:1321.3px;top:98.6px;line-height:18px;font-size:13px;color:#0c0c0c;letter-spacing:0.900px;">to</span>
<span class="t " style="left:1336.3px;top:98.6px;line-height:18px;font-size:13px;color:#0c0c0c;letter-spacing:0.349px;">https://vtop.vitap.ac.in:443</span>
<span class="t " style="left:1502.37px;top:98.6px;line-height:18px;font-size:13px;color:#0c0c0c;letter-spacing:-0.125px;">[115.244.41.198]</span>
<span class="t " style="left:1678.98px;top:98.6px;line-height:18px;font-size:13px;color:#0c0c0c;letter-spacing:0.416px;">Open</span>
<span class="t " style="left:1715.26px;top:98.6px;line-height:18px;font-size:13px;color:#0c0c0c;letter-spacing:0.451px;">browser</span>
<span class="t " style="left:15.81px;top:143.5px;line-height:18px;font-size:13px;color:#0c0c0c;letter-spacing:0.188px;">Time</span>
<span class="t " style="left:122.31px;top:143.5px;line-height:18px;font-size:13px;color:#0c0c0c;letter-spacing:0.344px;">Type</span>
<span class="t " style="left:184.53px;top:143.5px;line-height:18px;font-size:13px;color:#0c0c0c;letter-spacing:0.402px;">Direction</span>
<span class="t " style="left:341.72px;top:143.5px;line-height:18px;font-size:13px;color:#0c0c0c;letter-spacing:0.900px;">Method</span>
<span class="t " style="left:446.1px;top:143.5px;line-height:18px;font-size:13px;color:#0c0c0c;letter-spacing:-0.491px;">URL</span>
<span class="t " style="left:1615.01px;top:143.5px;line-height:18px;font-size:13px;color:#0c0c0c;">Status</span>
<span class="t " style="left:1655.65px;top:143.5px;line-height:18px;font-size:13px;color:#0c0c0c;letter-spacing:0.542px;">code</span>
<span class="t " style="left:1770.03px;top:143.5px;line-height:18px;font-size:13px;color:#0c0c0c;letter-spacing:0.749px;">Length</span>
<span class="t " style="left:15.45px;top:166.7px;line-height:18px;font-size:13px;color:#0c0c0c;letter-spacing:-0.532px;">23:39:01</span>
<span class="t " style="left:66.87px;top:166.7px;line-height:18px;font-size:13px;color:#0c0c0c;letter-spacing:-0.900px;">30</span>
<span class="t " style="left:83.03px;top:166.7px;line-height:18px;font-size:13px;color:#0c0c0c;letter-spacing:0.096px;">No...</span>
<span class="t " style="left:121.53px;top:166.7px;line-height:18px;font-size:13px;color:#0c0c0c;letter-spacing:-0.534px;">HTTP</span>
<span class="t " style="left:210.53px;top:166.7px;line-height:18px;font-size:13px;color:#0c0c0c;letter-spacing:0.057px;">Request</span>
<span class="t " style="left:341.16px;top:166.7px;line-height:18px;font-size:13px;color:#0c0c0c;letter-spacing:-0.900px;">POST</span>
<span class="t " style="left:446.2px;top:166.7px;line-height:18px;font-size:13px;color:#0c0c0c;letter-spacing:0.404px;">https://vtop.vitap.ac.in/vtop/summer/ViewStudentRegistrationDetailsPage</span>
<span class="t " style="left:16.13px;top:393px;line-height:18px;font-size:14.5px;color:#0c0c0c;font-weight:700;letter-spacing:0.671px;">Request</span>
<span class="t " style="left:20.78px;top:420.5px;line-height:18px;font-size:13px;color:#0c0c0c;letter-spacing:0.595px;">Pretty</span>
<span class="t " style="left:87.53px;top:420.5px;line-height:18px;font-size:13px;color:#0c0c0c;letter-spacing:-0.190px;">Raw</span>
<span class="t " style="left:142.53px;top:420.5px;line-height:18px;font-size:13px;color:#0c0c0c;letter-spacing:0.466px;">Hex</span>
<span class="t " style="left:1430.4px;top:418px;line-height:18px;font-size:14.5px;color:#0c0c0c;letter-spacing:-0.452px;">\n</span>
<span class="t " style="left:141.31px;top:948px;line-height:18px;font-size:13px;color:#7a7a7a;letter-spacing:-0.194px;">Search</span>
<span class="t " style="left:1403.89px;top:947.8px;line-height:18px;font-size:13px;color:#0c0c0c;">0</span>
<span class="t " style="left:1414.5px;top:947.8px;line-height:18px;font-size:13px;color:#0c0c0c;letter-spacing:0.582px;">highlights</span>
<span class="t " style="left:1501.03px;top:398px;line-height:18px;font-size:14.5px;color:#0c0c0c;font-weight:700;letter-spacing:0.890px;">Inspector</span>
<span class="t " style="left:1500.93px;top:439.1px;line-height:18px;font-size:13px;color:#0c0c0c;letter-spacing:0.057px;">Request</span>
<span class="t " style="left:1553.75px;top:439.1px;line-height:18px;font-size:13px;color:#0c0c0c;letter-spacing:0.571px;">attributes</span>
<span class="t " style="left:1767.65px;top:439px;line-height:18px;font-size:13px;color:#333;">2</span>
<span class="t " style="left:1500.93px;top:479.1px;line-height:18px;font-size:13px;color:#0c0c0c;letter-spacing:0.057px;">Request</span>
<span class="t " style="left:1553.75px;top:479.1px;line-height:18px;font-size:13px;color:#0c0c0c;letter-spacing:0.185px;">query</span>
<span class="t " style="left:1591.76px;top:479.1px;line-height:18px;font-size:13px;color:#0c0c0c;letter-spacing:0.318px;">parameters</span>
<span class="t " style="left:1767.79px;top:479px;line-height:18px;font-size:13px;color:#333;">0</span>
<span class="t " style="left:1500.93px;top:519.1px;line-height:18px;font-size:13px;color:#0c0c0c;letter-spacing:0.057px;">Request</span>
<span class="t " style="left:1553.46px;top:519.1px;line-height:18px;font-size:13px;color:#0c0c0c;letter-spacing:0.653px;">body</span>
<span class="t " style="left:1587.16px;top:519.1px;line-height:18px;font-size:13px;color:#0c0c0c;letter-spacing:0.384px;">parameters</span>
<span class="t " style="left:1768.0px;top:519px;line-height:18px;font-size:13px;color:#333;">4</span>
<span class="t " style="left:1500.93px;top:559.1px;line-height:18px;font-size:13px;color:#0c0c0c;letter-spacing:0.057px;">Request</span>
<span class="t " style="left:1553.75px;top:559.1px;line-height:18px;font-size:13px;color:#0c0c0c;letter-spacing:0.091px;">cookies</span>
<span class="t " style="left:1767.8px;top:559px;line-height:18px;font-size:13px;color:#333;">3</span>
<span class="t " style="left:1500.93px;top:599.1px;line-height:18px;font-size:13px;color:#0c0c0c;letter-spacing:0.057px;">Request</span>
<span class="t " style="left:1553.4px;top:599.1px;line-height:18px;font-size:13px;color:#0c0c0c;letter-spacing:0.198px;">headers</span>
<span class="t " style="left:1760.81px;top:599px;line-height:18px;font-size:13px;color:#333;">19</span>
<span class="t " style="left:21.13px;top:987.6px;line-height:18px;font-size:13px;color:#0c0c0c;letter-spacing:-0.122px;">Event</span>
<span class="t " style="left:58.2px;top:987.6px;line-height:18px;font-size:13px;color:#0c0c0c;letter-spacing:0.900px;">log</span>
<span class="t " style="left:108.57px;top:987.6px;line-height:18px;font-size:13px;color:#0c0c0c;letter-spacing:-0.359px;">All issues</span>
<span class="t " style="left:1658.13px;top:987.8px;line-height:18px;font-size:13px;color:#0c0c0c;letter-spacing:0.682px;">Memory:</span>
<span class="t " style="left:1714.71px;top:987.8px;line-height:18px;font-size:13px;color:#0c0c0c;letter-spacing:0.138px;">152.3MB</span>
<div class="ln"><div>1</div><div>2</div><div>3</div><div></div><div></div><div>4</div><div>5</div><div>6</div><div>7</div><div>8</div><div>9</div><div>10</div><div>11</div><div>12</div><div>13</div><div>14</div><div>15</div><div>16</div><div>17</div><div>18</div><div>19</div><div>20</div><div>21</div><div>22</div></div>
<div class="code"><div>POST /vtop/summer/ViewStudentRegistrationDetailsPage HTTP/1.1</div><div><span class="h">Host</span>: vtop.vitap.ac.in</div><div><span class="h">Cookie</span>: <span class="n">JSESSIONID</span>=<span class="v">AB3F5330346A1BFE5C95BF8EA98CD668</span>; <span class="n">cf_clearance</span>=</div><div><span class="v">GSkDWsCjFiByCEWKLWRsgjPY7dcgudqdoWLkhfFMwqQ-1723662361-1.0.1.1-6vkHf8VJZparVHvPepnlz_nt1XM2pTiHDrdwohQCLFhPhvHZerZpVthtzYqiVShK.HrgmS9CYed1rS3qMO.1Ug</span>; <span class="n">JSESSIONID</span>=</div><div><span class="v">51906D3D63B487861CF551B4BD8CEA14</span></div><div><span class="h">Content-Length</span>: 127</div><div><span class="h">Sec-Ch-Ua-Platform</span>: "Linux"</div><div><span class="h">Accept-Language</span>: en-US,en;q=0.9</div><div><span class="h">Sec-Ch-Ua</span>: "Chromium";v="131", "Not_A Brand";v="24"</div><div><span class="h">Sec-Ch-Ua-Mobile</span>: ?0</div><div><span class="h">X-Requested-With</span>: XMLHttpRequest</div><div><span class="h">User-Agent</span>: Mozilla/5.0 (Windows NT 10.0; Win64; x64) AppleWebKit/537.36 (KHTML, like Gecko) Chrome/131.0.6778.86 Safari/537.36</div><div><span class="h">Accept</span>: */*</div><div><span class="h">Content-Type</span>: application/x-www-form-urlencoded; charset=UTF-8</div><div><span class="h">Origin</span>: https://vtop.vitap.ac.in</div><div><span class="h">Sec-Fetch-Site</span>: same-origin</div><div><span class="h">Sec-Fetch-Mode</span>: cors</div><div><span class="h">Sec-Fetch-Dest</span>: empty</div><div><span class="h">Referer</span>: https://vtop.vitap.ac.in/vtop/content?</div><div><span class="h">Accept-Encoding</span>: gzip, deflate, br</div><div><span class="h">Priority</span>: u=1, i</div><div><span class="h">Connection</span>: keep-alive</div><div></div><div><span class="n">_csrf</span>=<span class="v">1785c274-c7b9-42ef-9acf-a81af8a1c58a</span>&amp;<span class="n">summerInternId</span>=<span class="v">20240081</span>&amp;<span class="n">authorizedID</span>=<span class="v">21MIC7178</span>&amp;<span class="n">x</span>=<span class="v">Sat%2C+30+Nov+2024+18%3A09%3A01+GMT</span></div></div>
</div></body></html>
